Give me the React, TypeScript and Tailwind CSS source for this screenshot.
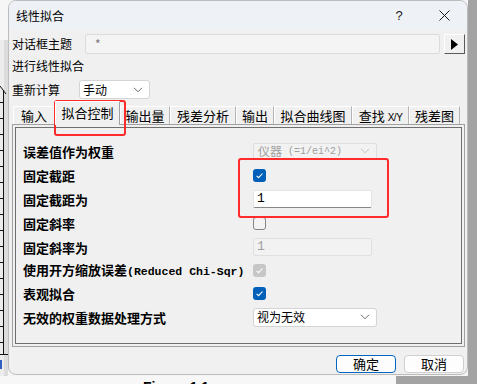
import React from "react";

const sans = "font-['Noto_Sans_CJK_SC','Noto_Sans',sans-serif]";
const mono = "font-['Liberation_Mono','Noto_Sans_CJK_SC',monospace]";

function Check({ color = "#ffffff" }: { color?: string }) {
  return (
    <svg width="13" height="13" viewBox="0 0 13 13">
      <path d="M3.6 6.9 L5.6 8.7 L9.5 4.5" stroke={color} strokeWidth="1.1" fill="none" />
    </svg>
  );
}

function Chevron({ color = "#6a6a6a" }: { color?: string }) {
  return (
    <svg width="10" height="6" viewBox="0 0 10 6">
      <path d="M1 0.8 L5 4.8 L9 0.8" stroke={color} strokeWidth="1" fill="none" />
    </svg>
  );
}

function LeftStrip() {
  const ticks: number[] = [];
  for (let y = 102; y <= 342; y += 16) ticks.push(y);
  return (
    <div className="w-[8px] h-full bg-[#ececec] flex flex-col">
      <div className="h-[40px] bg-[#f6f6f6]" />
      <svg width="8" height="336" viewBox="0 40 8 336" className="block">
        <rect x="4" y="40" width="4" height="336" fill="#dcdcdc" />
        <path d="M0 86 L6 94" stroke="#111" strokeWidth="1" />
        <line x1="3.5" y1="90" x2="3.5" y2="354" stroke="#111" strokeWidth="1" />
        {ticks.map((y) => (
          <line key={y} x1="0" y1={y + 0.5} x2="3" y2={y + 0.5} stroke="#111" strokeWidth="1" />
        ))}
        <line x1="0" y1="354.5" x2="8" y2="354.5" stroke="#111" strokeWidth="1" />
        <rect x="0" y="360" width="2" height="9" fill="#3060c0" />
      </svg>
    </div>
  );
}

function Tab({ label, w, active }: { label: React.ReactNode; w: number; active?: boolean }) {
  if (active) {
    return (
      <div
        style={{ width: w }}
        className="relative z-10 h-[24px] -mb-[1px] bg-[#f0f0f0] border-l border-t border-white border-r border-r-[#a0a0a0] flex items-center justify-center text-[13px] text-black pb-[2px]"
      >
        {label}
      </div>
    );
  }
  return (
    <div
      style={{ width: w }}
      className="h-[18px] bg-[#f0f0f0] border-l border-t border-white border-r border-r-[#b4b4b4] flex items-center justify-center text-[13px] text-black"
    >
      {label}
    </div>
  );
}

function Row({ h, label, children }: { h: number; label: React.ReactNode; children?: React.ReactNode }) {
  return (
    <div style={{ height: h }} className="grid grid-cols-[230px_1fr] items-center">
      <div className="font-bold text-[13px] text-black whitespace-nowrap leading-none">{label}</div>
      <div className="flex items-center">{children}</div>
    </div>
  );
}

function Dialog() {
  return (
    <div className={`w-[460px] h-[375px] bg-[#f0f0f0] border border-[#bcbcbc] rounded-[8px] overflow-hidden flex flex-col ${sans}`}>
      {/* title bar */}
      <div className="h-[29px] bg-[#eef2f7] flex items-center">
        <div className="pl-[7px] text-[12px] text-black">线性拟合</div>
        <div className="ml-auto flex h-full">
          <div className="w-[46px] h-full flex items-center justify-center text-[13px] text-[#1a1a1a] font-['Liberation_Sans',sans-serif]">?</div>
          <div className="w-[45px] h-full flex items-center justify-center">
            <svg width="11" height="11" viewBox="0 0 11 11">
              <path d="M0.5 0.5 L10.5 10.5 M10.5 0.5 L0.5 10.5" stroke="#1a1a1a" strokeWidth="1" />
            </svg>
          </div>
        </div>
      </div>

      <div className="flex flex-col pl-[3px] pr-[2px]">
        {/* row 1 */}
        <div className="mt-[4px] h-[20px] flex items-center">
          <div className="w-[73px] text-[12px] text-black">对话框主题</div>
          <div className="w-[355px] h-[20px] bg-[#f4f4f4] border border-[#dcdcdc] rounded-[2px] flex items-center pl-[9px] text-[12px] text-[#777]">
            *
          </div>
          <div className="ml-[4px] w-[21px] h-[20px] bg-[#f0f0f0] border border-t-white border-l-white border-r-[#5a5a5a] border-b-[#5a5a5a] flex items-center justify-center">
            <svg width="7" height="11" viewBox="0 0 7 11">
              <path d="M0 0 L7 5.5 L0 11 Z" fill="#000" />
            </svg>
          </div>
        </div>
        {/* row 2 */}
        <div className="h-[24px] flex items-center text-[12px] text-black">进行线性拟合</div>
        {/* row 3 */}
        <div className="mt-[2px] h-[19px] flex items-center">
          <div className="w-[67px] text-[12px] text-black">重新计算</div>
          <div className="w-[71px] h-[19px] bg-white border border-[#d4d4d4] rounded-[3px] flex items-center pl-[3px] pr-[6px] text-[12px] text-black">
            <span>手动</span>
            <span className="ml-auto flex items-center">
              <Chevron />
            </span>
          </div>
        </div>

        {/* tabs */}
        <div className="h-[25px] flex items-end pl-[1px]">
          <Tab label="输入" w={42} />
          <Tab label="拟合控制" w={65} active />
          <Tab label="输出量" w={50} />
          <Tab label="残差分析" w={66} />
          <Tab label="输出" w={38} />
          <Tab label="拟合曲线图" w={78} />
          <Tab
            label={
              <span className="flex items-baseline">
                查找<span className="ml-[3px] text-[10px] tracking-[-0.5px] font-['Liberation_Sans',sans-serif]">X/Y</span>
              </span>
            }
            w={57}
          />
          <Tab label="残差图" w={51} />
        </div>

        {/* panel */}
        <div className="h-[223px] border border-[#a0a0a0] bg-[#f0f0f0] p-[2px]">
          <div className="h-full border border-[#6e6e6e] pt-[11px] pl-[7px]">
            <Row h={24} label="误差值作为权重">
              <div className="w-[124px] h-[17px] border border-[#dedede] bg-[#f2f2f2] rounded-[2px] flex items-center pl-[4px] pr-[6px] text-[#a0a0a0]">
                <span className="text-[12px]">仪器</span>
                <span className={`${mono} text-[10px]`}>&nbsp;(=1/ei^2)</span>
                <span className="ml-auto flex items-center">
                  <Chevron color="#c0c0c0" />
                </span>
              </div>
            </Row>
            <Row h={24} label="固定截距">
              <div className="w-[13px] h-[13px] rounded-[3px] bg-[#005fb8] flex items-center justify-center">
                <Check />
              </div>
            </Row>
            <Row h={24} label="固定截距为">
              <div className={`w-[119px] h-[18px] bg-white border border-[#e3e3e3] border-b-[#868686] rounded-[2px] flex items-center pl-[3px] text-[13px] text-black ${mono}`}>
                1
              </div>
            </Row>
            <Row h={24} label="固定斜率">
              <div className="w-[13px] h-[13px] rounded-[3px] border border-[#858585] bg-[#f4f4f4]" />
            </Row>
            <Row h={24} label="固定斜率为">
              <div className={`w-[119px] h-[18px] bg-[#f2f2f2] border border-[#e0e0e0] rounded-[2px] flex items-center pl-[3px] text-[13px] text-[#a0a0a0] ${mono}`}>
                1
              </div>
            </Row>
            <Row
              h={23}
              label={
                <span className="flex items-baseline">
                  使用开方缩放误差<span className={`${mono} text-[11.5px] font-bold`}>(Reduced Chi-Sqr)</span>
                </span>
              }
            >
              <div className="w-[13px] h-[13px] rounded-[3px] bg-[#c6c6c6] flex items-center justify-center">
                <Check />
              </div>
            </Row>
            <Row h={23} label="表观拟合">
              <div className="w-[13px] h-[13px] rounded-[3px] bg-[#005fb8] flex items-center justify-center">
                <Check />
              </div>
            </Row>
            <Row h={24} label="无效的权重数据处理方式">
              <div className="w-[124px] h-[19px] bg-white border border-[#d4d4d4] rounded-[3px] flex items-center pl-[3px] pr-[6px] text-[12px] text-black">
                <span>视为无效</span>
                <span className="ml-auto flex items-center">
                  <Chevron />
                </span>
              </div>
            </Row>
          </div>
        </div>

        {/* buttons */}
        <div className="mt-[8px] h-[18px] flex justify-end gap-[8px] pr-[1px]">
          <div className="w-[60px] h-[18px] bg-[#fdfdfd] border border-[#0067c0] rounded-[4px] flex items-center justify-center text-[13px] text-black">
            确定
          </div>
          <div className="w-[60px] h-[18px] bg-[#fdfdfd] border border-[#d0d0d0] rounded-[4px] flex items-center justify-center text-[13px] text-black">
            取消
          </div>
        </div>
      </div>
    </div>
  );
}

export default function App() {
  return (
    <div className={`relative w-[477px] h-[384px] overflow-hidden bg-[#f4f4f4] flex flex-col ${sans}`}>
      <div className="h-[376px] flex bg-[#f4f4f4]">
        <LeftStrip />
        <Dialog />
        <div className="flex-1 bg-[#a3a3a3]" />
      </div>
      <div className="h-[8px] flex">
        <div className="w-[396px] bg-[#f7f7f7] overflow-hidden">
          <div className="ml-[143px] mt-[4px] text-[14px] leading-[14px] text-black font-['Liberation_Sans',sans-serif] font-bold">
            Figure 1.1
          </div>
        </div>
        <div className="flex-1 bg-[#a3a3a3]" />
      </div>

      {/* red annotation boxes */}
      <div className="absolute left-[54px] top-[100px] w-[72px] h-[36px] border-2 border-[#ff2a2a] rounded-[3px]" />
      <div className="absolute left-[238px] top-[158px] w-[151px] h-[60px] border-2 border-[#ff2a2a] rounded-[3px]" />
    </div>
  );
}
